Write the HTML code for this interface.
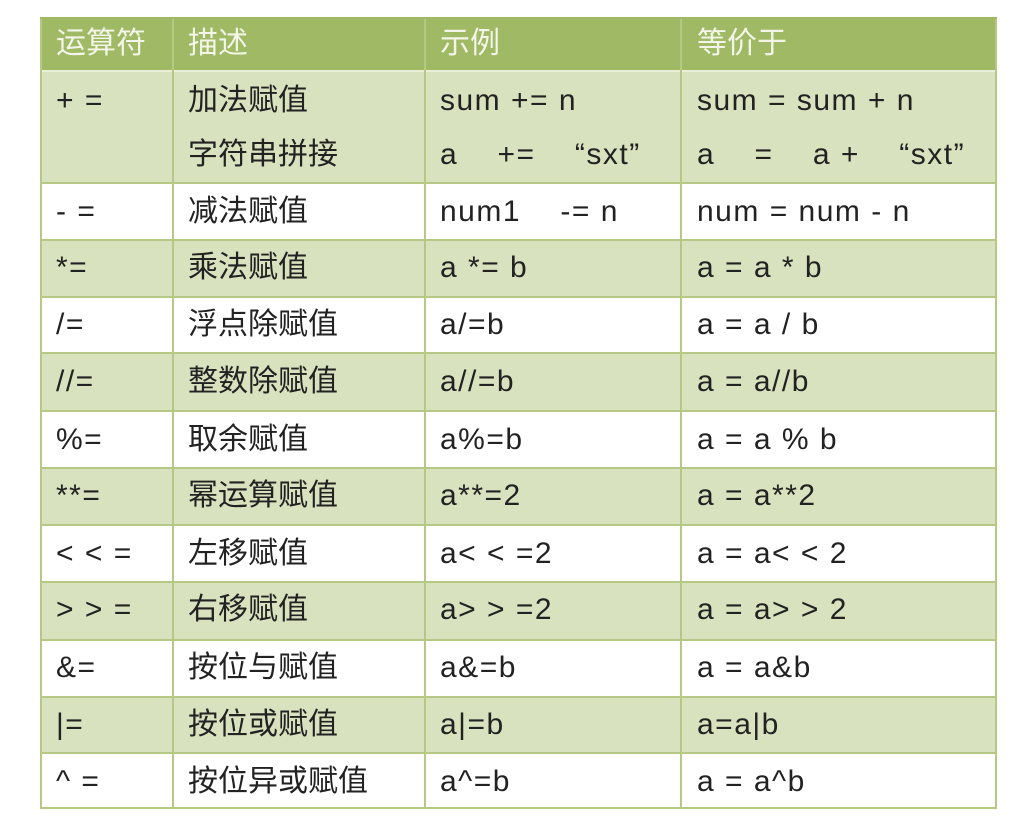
<!DOCTYPE html>
<html><head><meta charset="utf-8"><style>
body{margin:0;background:#fff;width:1036px;height:834px;position:relative;overflow:hidden;font-family:"Liberation Sans","Noto Sans CJK SC",sans-serif;}
.r{position:absolute;left:40px;width:957px;box-sizing:border-box;}
.g{background:#d8e2be;}
.w{background:#fff;}
.vl{position:absolute;top:17px;height:791px;width:2px;background:#b5c985;}
.hl{position:absolute;left:40px;width:957px;height:2px;background:#b5c985;}
</style></head><body>
<div class="r" style="top:17px;height:54px;background:#a0b964;"></div>
<div class="r g" style="top:71px;height:112px"></div>
<div class="r w" style="top:183px;height:57px"></div>
<div class="r g" style="top:240px;height:57px"></div>
<div class="r w" style="top:297px;height:56px"></div>
<div class="r g" style="top:353px;height:58px"></div>
<div class="r w" style="top:411px;height:57px"></div>
<div class="r g" style="top:468px;height:57px"></div>
<div class="r w" style="top:525px;height:57px"></div>
<div class="r g" style="top:582px;height:58px"></div>
<div class="r w" style="top:640px;height:57px"></div>
<div class="r g" style="top:697px;height:56px"></div>
<div class="r w" style="top:753px;height:55px"></div>
<div class="hl" style="top:70px;background:#e8eed8"></div>
<div class="hl" style="top:182px"></div><div class="hl" style="top:239px"></div><div class="hl" style="top:296px"></div><div class="hl" style="top:352px"></div><div class="hl" style="top:410px"></div><div class="hl" style="top:467px"></div><div class="hl" style="top:524px"></div><div class="hl" style="top:581px"></div><div class="hl" style="top:639px"></div><div class="hl" style="top:696px"></div><div class="hl" style="top:752px"></div><div class="hl" style="top:807px"></div>
<div class="vl" style="left:40px"></div><div class="vl" style="left:172px"></div><div class="vl" style="left:424px"></div><div class="vl" style="left:680px"></div><div class="vl" style="left:995px"></div>
<div style="position:absolute;left:40px;top:17px;width:957px;height:2px;background:#a0b964"></div>
<div id="t"></div>
<script>
const rows=[
[44,"运算符","描述","示例","等价于",1],
[101,"+ =","加法赋值","sum += n","sum = sum + n"],
[155,"","字符串拼接","a    +=    “sxt”","a    =    a +    “sxt”"],
[212,"- =","减法赋值","num1    -= n","num = num - n"],
[268,"*=","乘法赋值","a *= b","a = a * b"],
[325,"/=","浮点除赋值","a/=b","a = a / b"],
[382,"//=","整数除赋值","a//=b","a = a//b"],
[440,"%=","取余赋值","a%=b","a = a % b"],
[496,"**=","幂运算赋值","a**=2","a = a**2"],
[554,"< < =","左移赋值","a< < =2","a = a< < 2"],
[610,"> > =","右移赋值","a> > =2","a = a> > 2"],
[668,"&=","按位与赋值","a&=b","a = a&b"],
[725,"|=","按位或赋值","a|=b","a=a|b"],
[782,"^ =","按位异或赋值","a^=b","a = a^b"]];
const xs=[56,188,440,697];let h="";
for(const r of rows){for(let i=0;i<4;i++){const ls=(i==1||r[5])?0:1.5;h+=`<div style="position:absolute;left:${xs[i]}px;top:${r[0]-19}px;height:38px;line-height:38px;font-size:30px;letter-spacing:${ls}px;white-space:pre;color:${r[5]?'#f2f5e8':'#222'}">${r[i+1]}</div>`;}}
document.getElementById('t').innerHTML=h;
</script>
</body></html>
